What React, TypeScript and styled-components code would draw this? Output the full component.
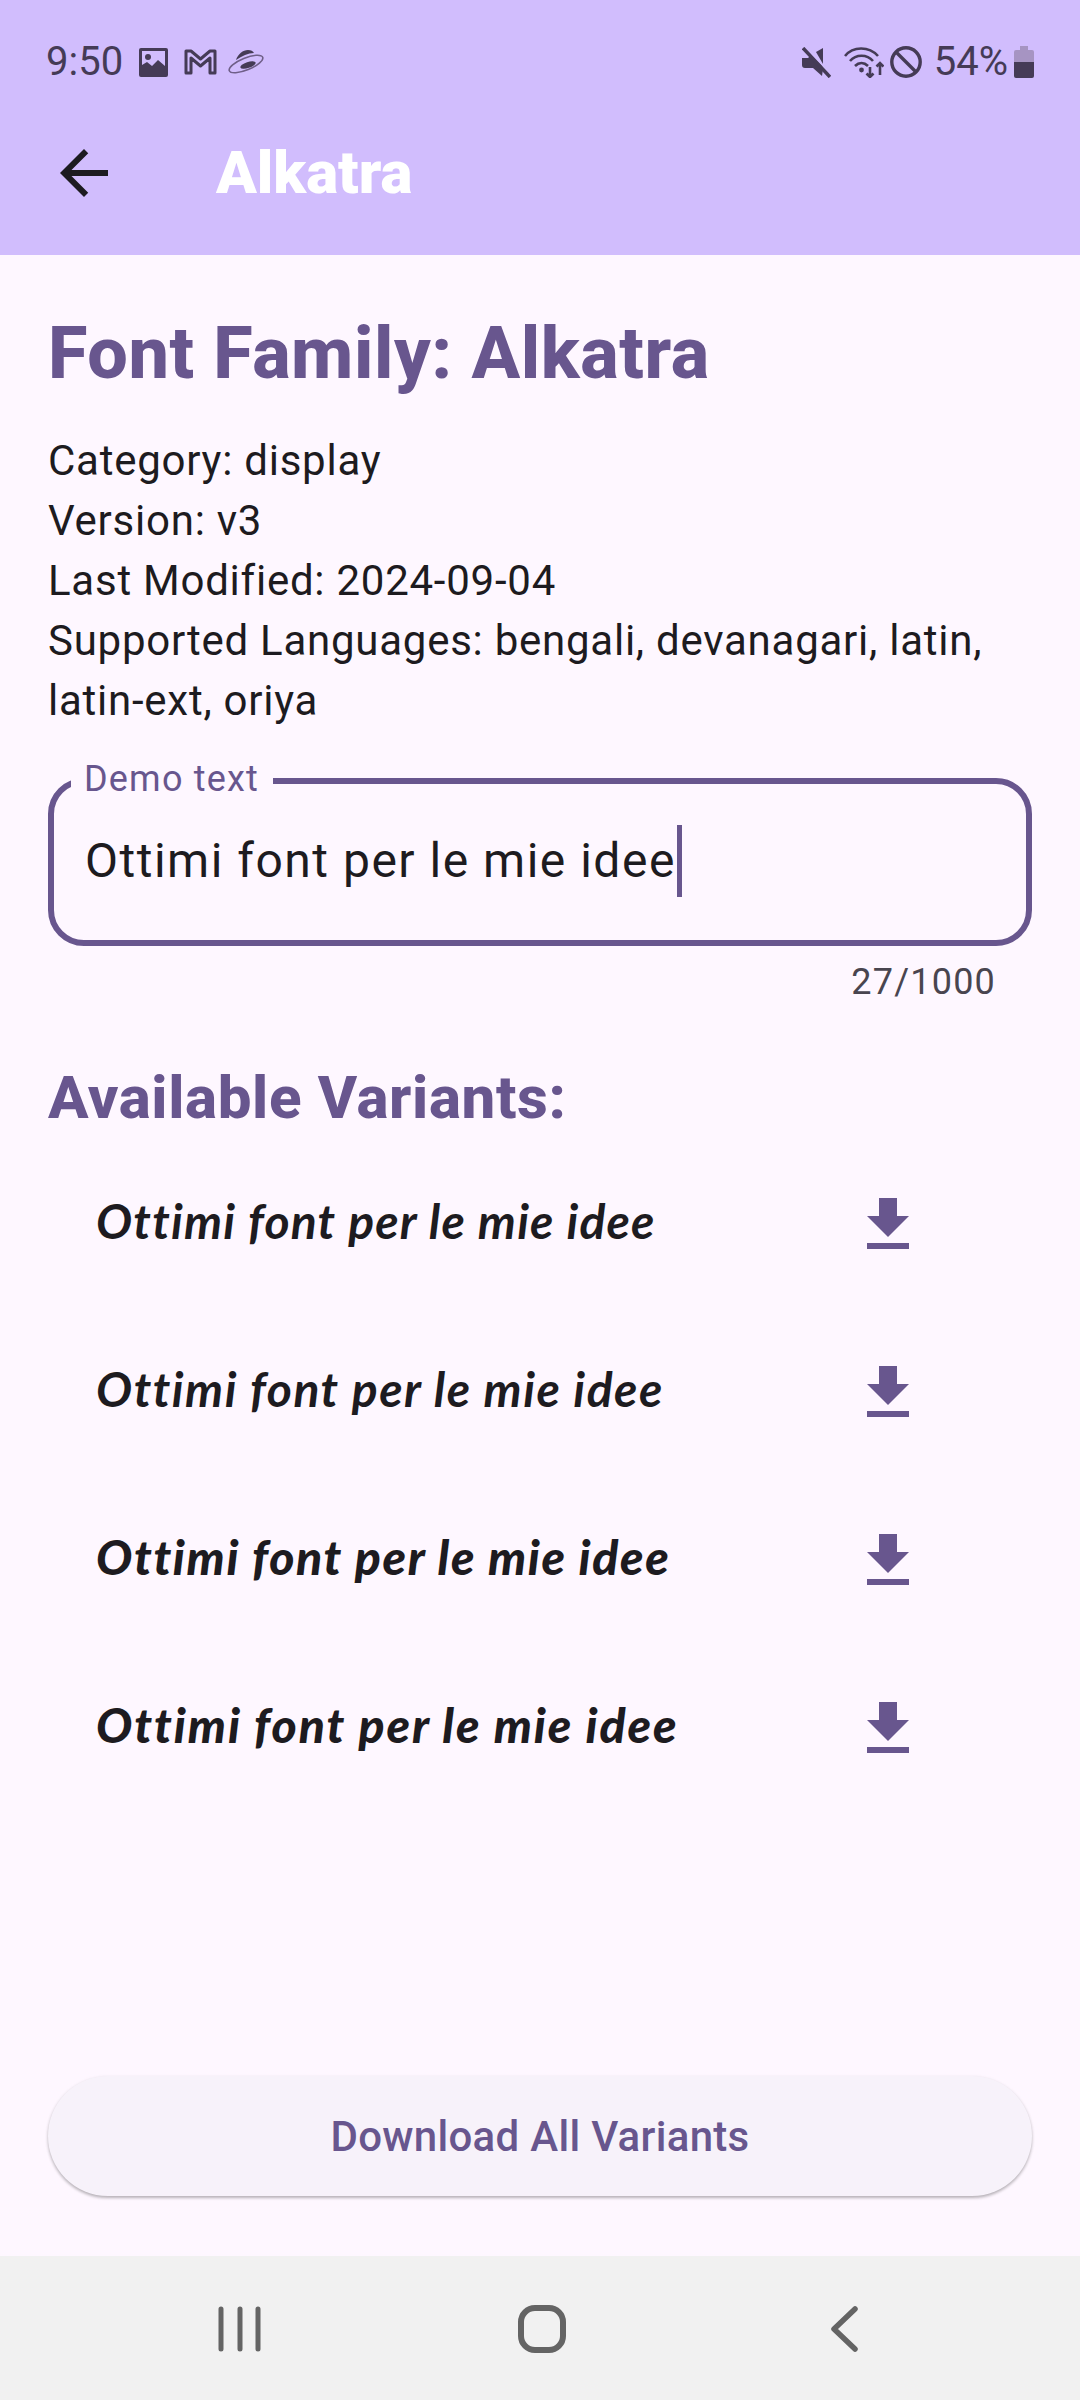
import { FC } from "react"
import styled, { createGlobalStyle } from "styled-components"

const GlobalStyle = createGlobalStyle`
  html, body {
    margin: 0;
    padding: 0;
    background: #fef7ff;
  }
  * {
    box-sizing: border-box;
  }
`

const Page = styled.div`
  width: 1080px;
  height: 2400px;
  display: flex;
  flex-direction: column;
  background: #fef7ff;
  color: #1d1b20;
  font-family: Roboto, "Noto Sans", sans-serif;
  overflow: hidden;
`

const Header = styled.header`
  height: 255px;
  flex: none;
  background: #d1bdfd;
  display: flex;
  flex-direction: column;
`

const StatusBar = styled.div`
  height: 90px;
  padding: 34px 46px 0 46px;
  display: flex;
  align-items: center;
  justify-content: space-between;
  color: #453b56;
`

const StatusGroup = styled.div`
  display: flex;
  align-items: center;
`

const StatusText = styled.span<{ $left?: number }>`
  font-size: 40px;
  line-height: 48px;
  font-weight: 400;
  margin-left: ${(p) => p.$left ?? 0}px;
`

const StatusIcon = styled.svg<{ $left?: number }>`
  display: block;
  flex: none;
  margin-left: ${(p) => p.$left ?? 0}px;
`

const AppBar = styled.div`
  flex: 1;
  display: flex;
  align-items: center;
  padding-left: 48px;
`

const BackIcon = styled.svg`
  display: block;
  width: 72px;
  height: 72px;
  fill: #1d1b20;
`

const AppTitle = styled.h1`
  margin: 0 0 0 96px;
  font-size: 60px;
  line-height: 72px;
  font-weight: 900;
  color: #ffffff;
`

const Content = styled.main`
  flex: 1;
  display: flex;
  flex-direction: column;
  padding: 57px 48px 0;
`

const FamilyTitle = styled.h2`
  margin: 0;
  font-size: 72px;
  line-height: 84px;
  font-weight: 800;
  letter-spacing: 0.6px;
  color: #68568e;
`

const Meta = styled.div`
  margin-top: 35px;
  font-size: 42px;
  line-height: 60px;
  letter-spacing: 0.75px;
`

const Field = styled.div`
  position: relative;
  margin-top: 47px;
  height: 168px;
  border: 6px solid #68568e;
  border-radius: 36px;
  padding: 0 31px 2px;
  display: flex;
  align-items: center;
`

const FieldLabel = styled.label`
  position: absolute;
  left: 17px;
  top: -23px;
  padding: 0 14px 0 13px;
  background: #fef7ff;
  color: #68568e;
  font-size: 36px;
  line-height: 36px;
  letter-spacing: 1.2px;
`

const FieldValue = styled.div`
  display: flex;
  align-items: center;
  font-size: 48px;
  line-height: 72px;
  letter-spacing: 1.5px;
`

const Caret = styled.span`
  display: block;
  width: 5px;
  height: 72px;
  margin-left: 1px;
  background: #68568e;
`

const Counter = styled.div`
  margin-top: 15px;
  padding-right: 36px;
  text-align: right;
  font-size: 36px;
  line-height: 42px;
  letter-spacing: 1.2px;
  color: #49454f;
`

const SectionTitle = styled.h3`
  margin: 59px 0 0;
  font-size: 60px;
  line-height: 72px;
  font-weight: 800;
  letter-spacing: 0.65px;
  color: #68568e;
`

const VariantList = styled.div`
  margin-top: 7px;
  display: flex;
  flex-direction: column;
`

const VariantRow = styled.div`
  height: 168px;
  padding: 0 108px 0 48px;
  display: flex;
  align-items: center;
  justify-content: space-between;
`

const VariantText = styled.span<{ $weight: number; $spacing: number }>`
  font-family: Lato, "Noto Sans", sans-serif;
  font-style: italic;
  font-size: 48px;
  line-height: 60px;
  padding-bottom: 8px;
  font-weight: ${(p) => p.$weight};
  letter-spacing: ${(p) => p.$spacing}px;
`

const DownloadIcon = styled.svg`
  display: block;
  width: 72px;
  height: 72px;
  fill: #68568e;
`

const Spacer = styled.div`
  flex: 1;
`

const WideButton = styled.button`
  flex: none;
  height: 120px;
  margin-bottom: 60px;
  border: 0;
  border-radius: 60px;
  background: #f7f2fa;
  color: #68568e;
  font-family: Roboto, sans-serif;
  font-size: 42px;
  font-weight: 500;
  letter-spacing: 0.3px;
  box-shadow: 0 2px 3px rgba(0, 0, 0, 0.25), 0 1px 4px rgba(0, 0, 0, 0.06);
`

const NavBar = styled.nav`
  flex: none;
  height: 144px;
  background: #f1f1f1;
  display: flex;
  align-items: center;
  justify-content: center;
  gap: 230px;
  padding: 2px 0 0 4px;
`

const NavIcon = styled.svg`
  display: block;
  width: 72px;
  height: 72px;
  fill: none;
  stroke: #646464;
`

const variants = [
  { id: "regular", weight: 700, spacing: 1.22 },
  { id: "medium", weight: 700, spacing: 1.52 },
  { id: "semibold", weight: 900, spacing: 1.65 },
  { id: "bold", weight: 900, spacing: 1.95 },
]

const App: FC = () => {
  return (
    <Page>
      <GlobalStyle />
      <Header>
        <StatusBar>
          <StatusGroup>
            <StatusText>9:50</StatusText>
            <StatusIcon $left={16} width="29" height="29" viewBox="0 0 29 29">
              <path
                fill="#453b56"
                fillRule="evenodd"
                d="M2 0h25a2 2 0 0 1 2 2v25a2 2 0 0 1-2 2H2a2 2 0 0 1-2-2V2a2 2 0 0 1 2-2zm1 3v14l5-3 5 4 6-6 7 6V3H3z"
              />
              <circle cx="9" cy="9" r="3" fill="#453b56" />
            </StatusIcon>
            <StatusIcon $left={16} width="33" height="26" viewBox="0 0 33 26">
              <path
                fill="none"
                stroke="#453b56"
                strokeWidth="3"
                strokeLinejoin="round"
                d="M2 2h5l9.5 8L26 2h5v22h-5V9l-9.5 8L7 9v15H2z"
              />
            </StatusIcon>
            <StatusIcon $left={11} width="36" height="26" viewBox="0 0 36 26">
              <path
                fill="#453b56"
                d="M8 11C10 5 15 1 20 1c3 0 5 1 6 3-6 0-12 3-18 7z"
              />
              <ellipse
                cx="18"
                cy="15"
                rx="18"
                ry="6"
                fill="none"
                stroke="#6f5f88"
                strokeWidth="1.6"
                transform="rotate(-22 18 15)"
              />
              <ellipse
                cx="20"
                cy="16"
                rx="8"
                ry="3"
                fill="#453b56"
                transform="rotate(-18 20 16)"
              />
            </StatusIcon>
          </StatusGroup>
          <StatusGroup>
            <StatusIcon width="29" height="31" viewBox="0 0 29 31">
              <path fill="#453b56" d="M0 11h6l3-3 9 9v0l2 2v0l1 3-1 7-9-8H3a3 3 0 0 1-3-3z" />
              <path fill="#453b56" d="M14 5l7-4v16z" />
              <path stroke="#453b56" strokeWidth="3.5" d="M1 1l27 29" />
            </StatusIcon>
            <StatusIcon $left={13} width="40" height="31" viewBox="0 0 40 31">
              <g fill="none" stroke="#453b56" strokeWidth="2.6">
                <path d="M1 9C9 -1 25 -1 34 9" />
                <path d="M6 14c6-7 17-7 23 0" />
                <path d="M11 19c4-4 9-4 13 0" />
                <path d="M26 20v10M22.5 26.5l3.5 3.5 3.5-3.5" />
                <path d="M36 28V16M32.5 19.5l3.5-3.5 3.5 3.5" />
              </g>
              <circle cx="17.5" cy="23" r="2.4" fill="#453b56" />
            </StatusIcon>
            <StatusIcon $left={6} width="32" height="32" viewBox="0 0 32 32">
              <circle cx="16" cy="16" r="14.2" fill="none" stroke="#453b56" strokeWidth="3.4" />
              <path stroke="#453b56" strokeWidth="3.4" d="M6 6l20 20" />
            </StatusIcon>
            <StatusText $left={12}>54%</StatusText>
            <StatusIcon $left={6} width="20" height="32" viewBox="0 0 20 32">
              <path fill="#a694c2" d="M6 0h8v4h4a2 2 0 0 1 2 2v10H0V6a2 2 0 0 1 2-2h4z" />
              <path fill="#453b56" d="M0 16h20v14a2 2 0 0 1-2 2H2a2 2 0 0 1-2-2z" />
            </StatusIcon>
          </StatusGroup>
        </StatusBar>
        <AppBar>
          <BackIcon viewBox="0 0 24 24">
            <path d="M20 11H7.83l5.59-5.59L12 4l-8 8 8 8 1.41-1.41L7.83 13H20v-2z" />
          </BackIcon>
          <AppTitle>Alkatra</AppTitle>
        </AppBar>
      </Header>
      <Content>
        <FamilyTitle>Font Family: Alkatra</FamilyTitle>
        <Meta>
          Category: display
          <br />
          Version: v3
          <br />
          Last Modified: 2024-09-04
          <br />
          Supported Languages: bengali, devanagari, latin, latin-ext, oriya
        </Meta>
        <Field>
          <FieldLabel>Demo text</FieldLabel>
          <FieldValue>
            Ottimi font per le mie idee
            <Caret />
          </FieldValue>
        </Field>
        <Counter>27/1000</Counter>
        <SectionTitle>Available Variants:</SectionTitle>
        <VariantList>
          {variants.map((v) => (
            <VariantRow key={v.id}>
              <VariantText $weight={v.weight} $spacing={v.spacing}>
                Ottimi font per le mie idee
              </VariantText>
              <DownloadIcon viewBox="0 0 24 24">
                <path d="M19 9h-4V3H9v6H5l7 7 7-7zM5 18v2h14v-2H5z" />
              </DownloadIcon>
            </VariantRow>
          ))}
        </VariantList>
        <Spacer />
        <WideButton>Download All Variants</WideButton>
      </Content>
      <NavBar>
        <NavIcon viewBox="0 0 72 72">
          <path strokeWidth="5" strokeLinecap="round" d="M17 16v40M36 16v40M54 16v40" />
        </NavIcon>
        <NavIcon viewBox="0 0 72 72">
          <rect x="15" y="15" width="42" height="42" rx="14" strokeWidth="6" />
        </NavIcon>
        <NavIcon viewBox="0 0 72 72">
          <path
            strokeWidth="5.5"
            strokeLinecap="round"
            strokeLinejoin="round"
            d="M47 16L26 36l21 20"
          />
        </NavIcon>
      </NavBar>
    </Page>
  )
}

export default App
